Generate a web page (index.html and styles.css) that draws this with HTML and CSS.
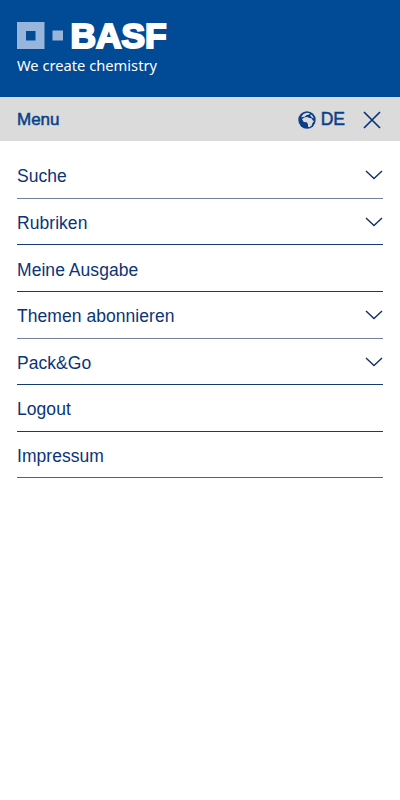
FILE: index.html
```
<!DOCTYPE html>
<html lang="de">
<head>
    <meta charset="UTF-8">
    <title>BASF Menu</title>
    <meta name="viewport" content="width=device-width, initial-scale=1.0">
    <link rel="stylesheet" href="styles.css">
</head>
<body>
    <header class="header">
        <svg class="logo" width="200" height="70" viewBox="0 -10 200 70">
            <path class="logo-square" fill-rule="evenodd" d="M0 0h27.500v27H0zM9 9v9.500h9.500V9z"/>
            <path class="logo-square" d="M35.500 8.500h10.500v10h-10.500z"/>
            <text class="logo-name" x="53.500" y="25.800" textLength="96" lengthAdjust="spacingAndGlyphs">BASF</text>
            <text class="logo-claim" x="0" y="49" textLength="140" lengthAdjust="spacingAndGlyphs">We create chemistry</text>
        </svg>
    </header>
    <div class="bar">
        <span class="bar-title">Menu</span>
        <a class="lang" href="#">
            <svg class="globe" width="18" height="18" viewBox="0 0 18 18">
                <circle cx="9" cy="9" r="8.700"/>
                <path class="land" d="M3.200 6.200C4.300 3.500 6.500 2 9 1.700l3 .6-1 1.300-2.600.7-1.600 1.400-2 .4z"/>
                <path class="land" d="M4 8.200l2-1.700 3.300-.5 2.200 1 2 .2 1.300 2.200 1.300.5-1.600 2-.8 2.500-2.200 1.900-1.400-.6-.2-2.600-1.200-1.800-2.900-.3z"/>
                <path class="land" d="M12.600 3.300l1.900 1.400 1.300 2.700-1.800-1-1.700-1.600z"/>
            </svg>
            <span>DE</span>
        </a>
        <button class="close" aria-label="Schließen">
            <svg width="18" height="18" viewBox="0 0 18 18"><path d="M1 1l16 16M17 1L1 17"/></svg>
        </button>
    </div>
    <nav class="menu">
        <a class="item soft" href="#">Suche
            <svg class="arrow" width="18" height="10" viewBox="0 0 18 10"><path d="M1 1l8 7.500L17 1"/></svg>
        </a>
        <a class="item" href="#">Rubriken
            <svg class="arrow" width="18" height="10" viewBox="0 0 18 10"><path d="M1 1l8 7.500L17 1"/></svg>
        </a>
        <a class="item" href="#">Meine Ausgabe</a>
        <a class="item soft" href="#">Themen abonnieren
            <svg class="arrow" width="18" height="10" viewBox="0 0 18 10"><path d="M1 1l8 7.500L17 1"/></svg>
        </a>
        <a class="item" href="#">Pack&amp;Go
            <svg class="arrow" width="18" height="10" viewBox="0 0 18 10"><path d="M1 1l8 7.500L17 1"/></svg>
        </a>
        <a class="item" href="#">Logout</a>
        <a class="item last" href="#">Impressum</a>
    </nav>
</body>
</html>
```

FILE: styles.css
```
* {
    box-sizing: border-box;
}
body {
    margin: 0;
    min-height: 100vh;
    background: #fff;
    color: #0b3479;
    font-family: "Liberation Sans", Arial, sans-serif;
}
.header {
    height: 97px;
    padding: 12px 17px 0;
    background: #004a96;
}
.logo {
    display: block;
    overflow: visible;
}
.logo-square {
    fill: #98b6dc;
}
.logo-name {
    fill: #fff;
    stroke: #fff;
    stroke-width: 2.2px;
    font-size: 35.5px;
    font-weight: bold;
}
.logo-claim {
    fill: #fff;
    font-family: "Noto Sans", "Open Sans", sans-serif;
    font-size: 15.3px;
}
.bar {
    display: flex;
    align-items: center;
    height: 44px;
    padding: 1px 19px 0 17px;
    background: #dbdbdb;
    color: #0a3f88;
    font-size: 17px;
    -webkit-text-stroke: 0.5px #0a3f88;
}
.bar-title {
    flex: 1;
}
.lang {
    display: flex;
    align-items: center;
    gap: 5px;
    color: inherit;
    font-size: 17.5px;
    text-decoration: none;
}
.globe {
    fill: #0a3f88;
}
.land {
    fill: #dbdbdb;
}
.close {
    display: flex;
    margin-left: 18px;
    padding: 0;
    border: none;
    background: none;
    cursor: pointer;
}
.close path {
    fill: none;
    stroke: #0a3479;
    stroke-width: 1.7;
}
.menu {
    display: flex;
    flex-direction: column;
    padding: 11px 17px 0;
}
.item {
    display: flex;
    justify-content: space-between;
    align-items: center;
    height: 46.64px;
    padding-top: 4px;
    border-bottom: 1px solid #143c70;
    color: inherit;
    font-size: 17.5px;
    letter-spacing: 0.05px;
    text-decoration: none;
}
.soft {
    border-bottom-color: #7380a4;
}
.last {
    border-bottom-color: #41658f;
}
.arrow {
    margin-bottom: 3px;
    fill: none;
    stroke: #122f66;
    stroke-width: 1.4;
}
```
